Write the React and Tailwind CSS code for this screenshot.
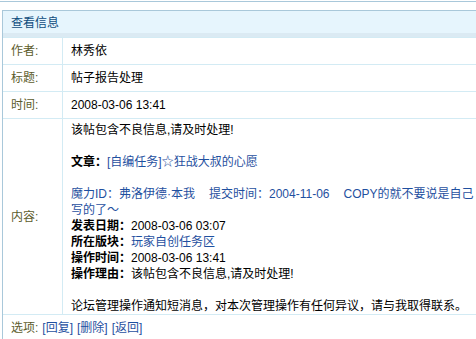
import React from 'react';

const font = { fontFamily: '"Liberation Sans", "Noto Sans CJK SC", sans-serif' };

function Row({ label, children }) {
  return (
    <div className="grid grid-cols-[60px_1fr] border-t border-[#d3ebf4]">
      <div className="flex items-center border-r border-[#d3ebf4] pl-2 text-[#5c5c2c]">{label}</div>
      <div className="flex h-[26px] items-center pl-2 text-black">{children}</div>
    </div>
  );
}

function Bold({ children }) {
  return <span className="font-bold text-black">{children}</span>;
}

export default function App() {
  return (
    <div className="min-h-screen bg-white text-[12px] leading-4" style={font}>
      <div className="mt-px border-t border-[#a9c8da]" />
      <div className="ml-[2px] mt-2 overflow-hidden border-l border-t border-[#a9c8da]">
        {/* header */}
        <div className="h-[26px] bg-[#e6f5fd] border-b-4 border-[#dbeaf3] pl-2 pt-[2px] flex items-center text-[12px] text-[#0f4d7e]">
          查看信息
        </div>

        <Row label="作者:">林秀依</Row>
        <Row label="标题:">帖子报告处理</Row>
        <Row label="时间:">2008-03-06 13:41</Row>

        {/* content */}
        <div className="grid grid-cols-[60px_1fr] border-t border-[#d3ebf4]">
          <div className="flex items-center border-r border-[#d3ebf4] pl-2 text-[#5c5c2c]">内容:</div>
          <div className="pl-2 pt-[3px] whitespace-nowrap">
            <div>该帖包含不良信息,请及时处理!</div>
            <div className="h-4" />
            <div>
              <Bold>文章：</Bold>
              <span className="text-[#1f50a0]">[自编任务]☆狂战大叔的心愿</span>
            </div>
            <div className="h-4" />
            <div className="text-[#1f50a0]">
              魔力ID：弗洛伊德·本我<span className="inline-block w-[14px]" />提交时间：2004-11-06
              <span className="inline-block w-[14px]" />COPY的就不要说是自己
            </div>
            <div className="text-[#1f50a0]">写的了～</div>
            <div>
              <Bold>发表日期：</Bold>2008-03-06 03:07
            </div>
            <div>
              <Bold>所在版块：</Bold>
              <span className="text-[#1f50a0]">玩家自创任务区</span>
            </div>
            <div>
              <Bold>操作时间：</Bold>2008-03-06 13:41
            </div>
            <div>
              <Bold>操作理由：</Bold>该帖包含不良信息,请及时处理!
            </div>
            <div className="h-4" />
            <div>论坛管理操作通知短消息，对本次管理操作有任何异议，请与我取得联系。</div>
          </div>
        </div>

        {/* options */}
        <div className="flex h-[26px] items-center border-t border-[#d3ebf4] pl-2 text-[#5c5c2c]">
          选项:
          <span className="ml-1 text-[#1f50a0]">[回复]</span>
          <span className="ml-1 text-[#1f50a0]">[删除]</span>
          <span className="ml-1 text-[#1f50a0]">[返回]</span>
        </div>
      </div>
    </div>
  );
}
